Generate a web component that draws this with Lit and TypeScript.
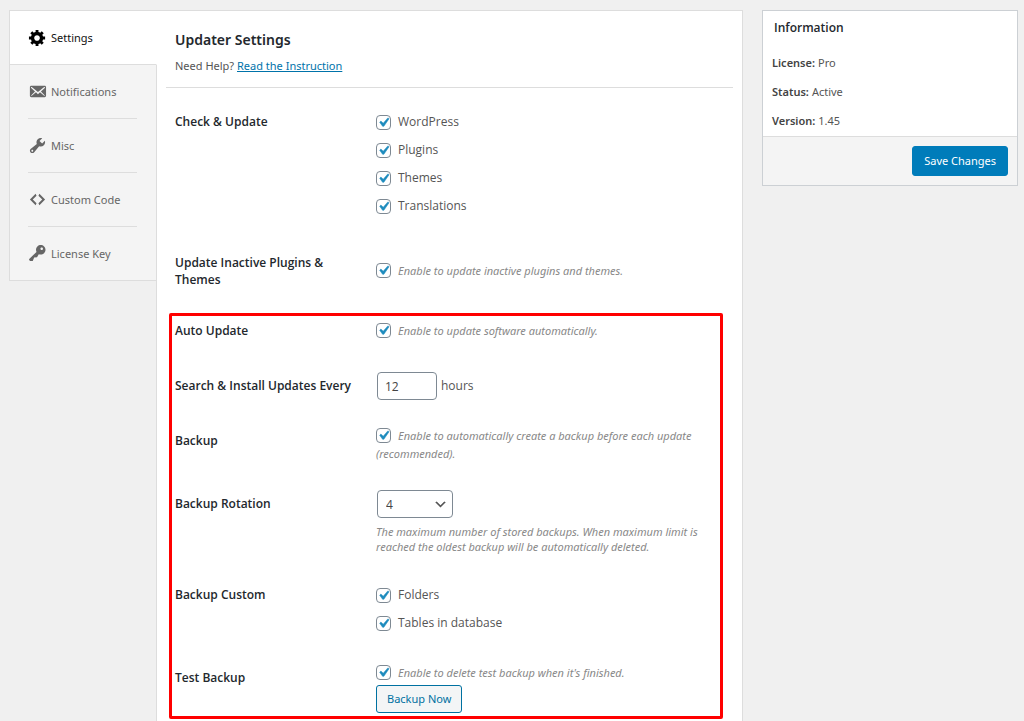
import { LitElement, html, css, svg } from "lit";
import { customElement, state } from "lit/decorators.js";
import { classMap } from "lit/directives/class-map.js";

const icons = {
  gear: "M18 12h-2.18c-.17.7-.44 1.35-.81 1.93l1.54 1.54-2.1 2.1-1.54-1.54c-.58.36-1.23.63-1.91.79V19H8v-2.18c-.68-.16-1.33-.43-1.91-.79l-1.54 1.54-2.12-2.12 1.54-1.54c-.36-.58-.63-1.23-.79-1.91H1V9.03h2.17c.16-.7.44-1.35.8-1.94L2.43 5.55l2.1-2.1 1.54 1.54c.58-.37 1.24-.64 1.93-.81V2h3v2.18c.68.16 1.33.43 1.91.79l1.54-1.54 2.12 2.12-1.54 1.54c.36.59.64 1.24.8 1.94H18V12zm-8.5 1.5c1.66 0 3-1.34 3-3s-1.34-3-3-3-3 1.34-3 3 1.34 3 3 3z",
  mail: "M19 14.5v-9c0-.83-.67-1.5-1.5-1.5H3.49c-.83 0-1.5.67-1.5 1.5v9c0 .83.67 1.5 1.5 1.5H17.5c.83 0 1.5-.67 1.5-1.5zm-1.31-9.11c.33.33.15.67-.03.84L13.6 9.95l3.9 4.06c.12.14.2.36.06.51-.13.16-.43.15-.56.05l-4.37-3.73-2.14 1.95-2.13-1.95-4.37 3.73c-.13.1-.43.11-.56-.05-.14-.15-.06-.37.06-.51l3.9-4.06-4.06-3.72c-.18-.17-.36-.51-.03-.84s.67-.17.95.07l6.24 5.04 6.25-5.04c.28-.24.62-.4.95-.07z",
  wrench: "M16.68 9.77c-1.34 1.34-3.3 1.67-4.95.99l-5.41 6.52c-.99.99-2.59.99-3.58 0s-.99-2.59 0-3.57l6.52-5.42c-.68-1.65-.35-3.61.99-4.95 1.28-1.28 3.12-1.62 4.72-1.06l-2.89 2.89 2.82 2.82 2.86-2.87c.53 1.58.18 3.39-1.08 4.65zM3.81 16.21c.4.39 1.04.39 1.43 0 .4-.4.4-1.04 0-1.43-.39-.4-1.03-.4-1.43 0-.39.39-.39 1.03 0 1.43z",
  code: "M9 6l-4 4 4 4-1 2-6-6 6-6zm2 8l4-4-4-4 1-2 6 6-6 6z",
  key: "M16.95 2.58c1.96 1.95 1.96 5.12 0 7.07-1.51 1.51-3.75 1.84-5.59 1.01l-1.87 3.31-2.99.31L5 18H2l-1-2 7.95-7.69c-.92-1.87-.62-4.18.93-5.73 1.95-1.96 5.12-1.96 7.07 0zm-2.51 3.79c.74 0 1.33-.6 1.33-1.34 0-.73-.59-1.33-1.33-1.33-.73 0-1.33.6-1.33 1.33 0 .74.6 1.34 1.33 1.34z",
};

const tabs: { label: string; icon: keyof typeof icons }[] = [
  { label: "Settings", icon: "gear" },
  { label: "Notifications", icon: "mail" },
  { label: "Misc", icon: "wrench" },
  { label: "Custom Code", icon: "code" },
  { label: "License Key", icon: "key" },
];

@customElement("app-root")
export class AppRoot extends LitElement {
  @state() private active = "Settings";

  static styles = css`
    :host {
      display: block;
      box-sizing: border-box;
      min-height: 100vh;
      background: #f0f0f0;
      color: #555;
      font: 11px/18px "Noto Sans", "Open Sans", sans-serif;
    }
    * {
      box-sizing: border-box;
    }
    .page {
      display: flex;
      align-items: stretch;
      gap: 19px;
      min-height: 100vh;
      padding: 10px 6px 0 9px;
    }
    .panel {
      flex: 1;
      min-width: 0;
      display: flex;
      border: 1px solid #ddd;
      border-width: 1px 1px 0 0;
    }
    .side {
      flex: none;
      width: 148px;
      display: flex;
      flex-direction: column;
    }
    .tabs {
      background: #f4f4f4;
      border: 1px solid #ddd;
      border-width: 0 0 1px 1px;
    }
    .tab {
      display: block;
      padding: 0 19px 0 18px;
      color: #666;
      text-decoration: none;
      border-right: 1px solid #ddd;
    }
    .tab.active {
      background: #fff;
      color: #111;
      border-bottom: 1px solid #ddd;
      border-right-color: #fff;
    }
    .tab-line {
      display: flex;
      align-items: center;
      gap: 4px;
      height: 54px;
      border-bottom: 1px solid #ddd;
    }
    .tab.active .tab-line,
    .tab:last-child .tab-line {
      height: 53px;
      border-bottom: 0;
    }
    .tab svg {
      width: 19px;
      height: 19px;
      fill: currentColor;
    }
    .tab.active svg {
      fill: #000;
    }
    .rest {
      flex: 1;
      border-right: 1px solid #ddd;
    }
    .content {
      flex: 1;
      min-width: 0;
      background: #fff;
      padding-bottom: 2px;
    }
    .head {
      margin: 0 9px;
      padding: 17px 9px 12px;
      border-bottom: 1px solid #ddd;
    }
    h1 {
      margin: 0;
      font-size: 14px;
      line-height: 24px;
      font-weight: 600;
      color: #23282d;
    }
    .help {
      margin: 5px 0 0;
    }
    .head a {
      color: #0073aa;
    }
    .basic,
    .rows {
      display: grid;
    }
    .basic {
      gap: 34px;
      padding: 20px 20px 25px 18px;
    }
    .boxed {
      margin: 0 19px 0 12px;
      padding: 1px 3px 3px;
      border: 3px solid #f00;
      border-radius: 2px;
    }
    .rows {
      gap: 27px;
    }
    .row {
      display: grid;
      grid-template-columns: 201px minmax(0, 1fr);
    }
    .row.middle {
      align-items: center;
    }
    .name,
    .option,
    .hours,
    select {
      font-family: "Open Sans", "Noto Sans", sans-serif;
      font-size: 12px;
    }
    .name {
      margin: 0;
      font-weight: 600;
      line-height: 28px;
      color: #23282d;
    }
    .name.wrap {
      max-width: 180px;
      line-height: 17px;
    }
    .option {
      display: flex;
      align-items: center;
      height: 28px;
    }
    .hint {
      font-style: italic;
      color: #888;
    }
    p.hint {
      margin: 6px 0 0;
      line-height: 15px;
    }
    .flow {
      display: block;
    }
    input[type="checkbox"] {
      appearance: none;
      flex: none;
      width: 15px;
      height: 15px;
      margin: 0 7px 0 0;
      vertical-align: -3px;
      border: 1px solid #7e8993;
      border-radius: 4px;
      background: #fff;
    }
    input[type="checkbox"]:checked {
      background: #fff
        url("data:image/svg+xml,%3Csvg xmlns='http://www.w3.org/2000/svg' viewBox='0 0 20 20'%3E%3Cpath d='M14.83 4.89l1.34.94-5.81 8.38H9.02L5.78 9.67l1.34-1.25 2.57 2.4z' fill='%231e8cbe' stroke='%231e8cbe' stroke-width='.6'/%3E%3C/svg%3E")
        center / 18px 18px no-repeat;
    }
    .hours {
      display: flex;
      align-items: center;
      gap: 4px;
    }
    .number,
    select {
      height: 28px;
      margin: 0 0 0 1px;
      border: 1px solid #7e8993;
      border-radius: 4px;
      background-color: #fff;
      color: #444;
    }
    .number {
      width: 60px;
      padding: 0 7px;
      font: inherit;
    }
    select {
      display: block;
      width: 76px;
      appearance: none;
      padding: 0 24px 0 8px;
      background: #fff
        url("data:image/svg+xml,%3Csvg xmlns='http://www.w3.org/2000/svg' viewBox='0 0 20 20'%3E%3Cpath d='M5 6l5 5 5-5 2 1-7 7-7-7z' fill='%23555'/%3E%3C/svg%3E")
        right 4px center / 15px 15px no-repeat;
    }
    button {
      font: inherit;
      border-radius: 3px;
      padding: 0 10px;
      white-space: nowrap;
      cursor: pointer;
    }
    .secondary {
      display: block;
      height: 28px;
      margin-top: 3px;
      color: #0071a1;
      background: #f3f5f6;
      border: 1px solid #0071a1;
    }
    .info {
      flex: none;
      align-self: flex-start;
      width: 256px;
      background: #fff;
      border: 1px solid #ccd0d4;
    }
    .info h2 {
      margin: 0;
      padding: 8px 11px;
      font-family: "Open Sans", "Noto Sans", sans-serif;
      font-size: 12px;
      line-height: 18px;
      font-weight: 600;
      color: #23282d;
    }
    .facts {
      display: grid;
      gap: 11px;
      margin: 0;
      padding: 9px 9px 6px;
    }
    .facts div {
      display: flex;
      gap: 3px;
    }
    dt {
      font-weight: 600;
      color: #444;
    }
    dd {
      margin: 0;
    }
    .foot {
      display: flex;
      justify-content: flex-end;
      padding: 9px;
      background: #f4f4f4;
      border-top: 1px solid #ddd;
    }
    .primary {
      height: 30px;
      padding: 0 11px;
      color: #fff;
      background: #007cba;
      border: 1px solid #007cba;
    }
  `;

  private option(label: string) {
    return html`<label class="option"><input type="checkbox" checked />${label}</label>`;
  }

  private hint(text: string) {
    return html`<label class="flow hint"><input type="checkbox" checked />${text}</label>`;
  }

  private tab(label: string, path: string) {
    const on = this.active === label;
    return html`<a
      href="#"
      class=${classMap({ tab: true, active: on })}
      aria-current=${on ? "page" : "false"}
      @click=${(e: Event) => {
        e.preventDefault();
        this.active = label;
      }}
      ><span class="tab-line"
        ><svg viewBox="0 0 20 20" aria-hidden="true">${svg`<path d=${path} />`}</svg>${label}</span
      ></a
    >`;
  }

  render() {
    return html`
      <div class="page">
        <main class="panel">
          <div class="side">
            <nav class="tabs">${tabs.map((t) => this.tab(t.label, icons[t.icon]))}</nav>
            <div class="rest"></div>
          </div>
          <div class="content">
            <header class="head">
              <h1>Updater Settings</h1>
              <p class="help">Need Help? <a href="#">Read the Instruction</a></p>
            </header>
            <div class="basic">
              <div class="row">
                <h3 class="name">Check &amp; Update</h3>
                <div>
                  ${["WordPress", "Plugins", "Themes", "Translations"].map((l) => this.option(l))}
                </div>
              </div>
              <div class="row middle">
                <h3 class="name wrap">Update Inactive Plugins &amp; Themes</h3>
                ${this.hint("Enable to update inactive plugins and themes.")}
              </div>
            </div>
            <section class="boxed rows">
              <div class="row middle">
                <h3 class="name">Auto Update</h3>
                ${this.hint("Enable to update software automatically.")}
              </div>
              <div class="row middle">
                <label class="name" for="interval">Search &amp; Install Updates Every</label>
                <div class="hours"><input class="number" id="interval" type="text" inputmode="numeric" value="12" /><span>hours</span></div>
              </div>
              <div class="row">
                <h3 class="name">Backup</h3>
                ${this.hint("Enable to automatically create a backup before each update (recommended).")}
              </div>
              <div class="row">
                <label class="name" for="rotation">Backup Rotation</label>
                <div>
                  <select id="rotation">
                    <option>1</option>
                    <option>2</option>
                    <option>3</option>
                    <option selected>4</option>
                    <option>5</option>
                  </select>
                  <p class="hint">The maximum number of stored backups. When maximum limit is reached the oldest backup will be automatically deleted.</p>
                </div>
              </div>
              <div class="row">
                <h3 class="name">Backup Custom</h3>
                <div>${["Folders", "Tables in database"].map((l) => this.option(l))}</div>
              </div>
              <div class="row">
                <h3 class="name">Test Backup</h3>
                <div>
                  ${this.hint("Enable to delete test backup when it's finished.")}
                  <button class="secondary" type="button">Backup Now</button>
                </div>
              </div>
            </section>
          </div>
        </main>
        <aside class="info">
          <h2>Information</h2>
          <dl class="facts">
            <div><dt>License:</dt><dd>Pro</dd></div>
            <div><dt>Status:</dt><dd>Active</dd></div>
            <div><dt>Version:</dt><dd>1.45</dd></div>
          </dl>
          <div class="foot"><button class="primary" type="button">Save Changes</button></div>
        </aside>
      </div>
    `;
  }
}
